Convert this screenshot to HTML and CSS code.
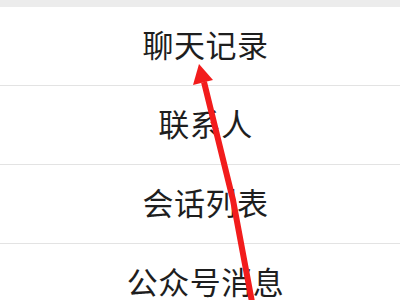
FILE: index.html
```html
<!DOCTYPE html>
<html>
<head>
<meta charset="utf-8">
<link rel="stylesheet" href="styles.css">
</head>
<body>
<div class="page">
  <div class="top-band"></div>
  <ul class="menu">
    <li class="item">聊天记录</li>
    <li class="item">联系人</li>
    <li class="item">会话列表</li>
    <li class="item">公众号消息</li>
  </ul>
  <svg class="arrow" width="400" height="300" viewBox="0 0 400 300">
    <path d="M252 302 L233 200 L204 82" fill="none" stroke="#f21c1c" stroke-width="6" stroke-linecap="butt" stroke-linejoin="round"/>
    <polygon points="199,64 193,85 213,80" fill="#f21c1c"/>
  </svg>
</div>
</body>
</html>
```

FILE: styles.css
```css
html, body {
  margin: 0;
  padding: 0;
  background: #ffffff;
}
.page {
  position: relative;
  width: 400px;
  height: 300px;
  overflow: hidden;
  background: #ffffff;
  font-family: "Noto Sans CJK SC", "Noto Sans", sans-serif;
}
.top-band {
  height: 7px;
  background: #ececec;
}
.menu {
  list-style: none;
  margin: 0;
  padding: 0;
}
.item {
  box-sizing: border-box;
  height: 79px;
  padding: 0 0 5px 11px;
  border-bottom: 1px solid #e3e3e3;
  display: flex;
  align-items: center;
  justify-content: center;
  font-size: 31px;
  color: #1e1e1e;
  letter-spacing: 0.5px;
}
.arrow {
  position: absolute;
  left: 0;
  top: 0;
}
```
